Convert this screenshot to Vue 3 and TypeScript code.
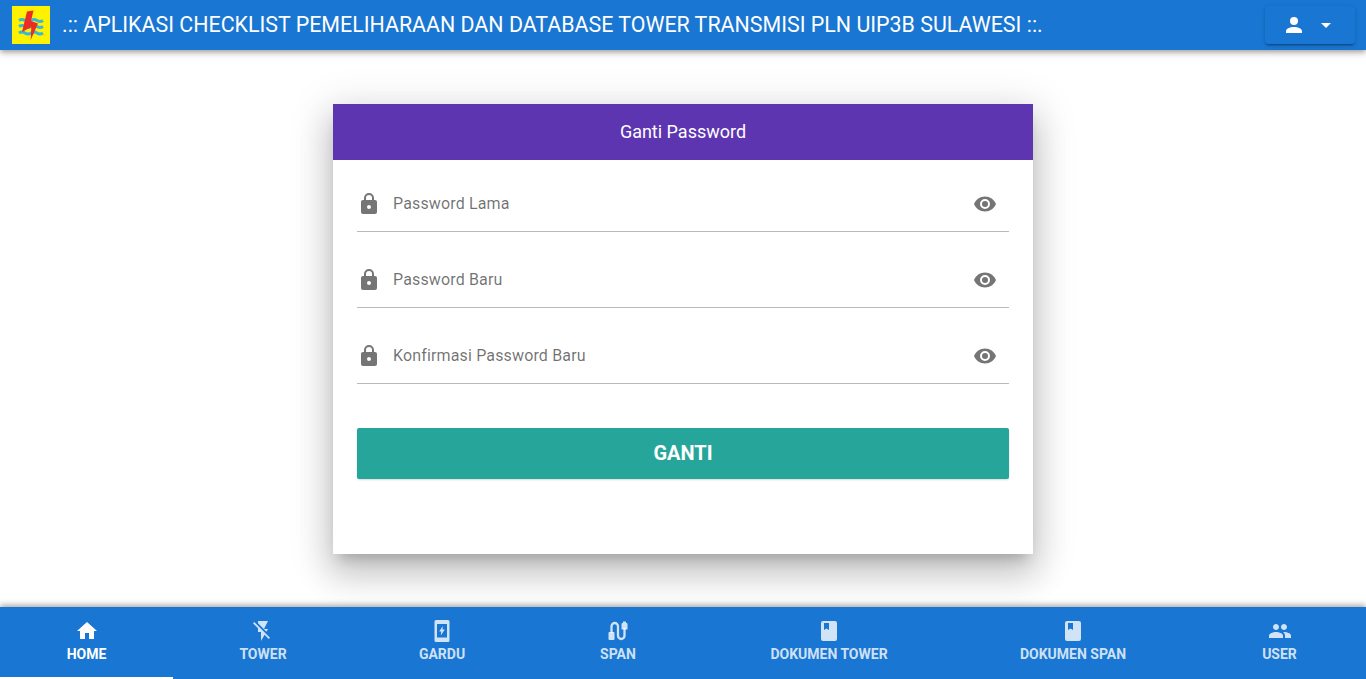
<script setup lang="ts">
interface Tab { label: string; path: string; }

const lock = 'M12,17A2,2 0 0,0 14,15C14,13.89 13.1,13 12,13A2,2 0 0,0 10,15A2,2 0 0,0 12,17M18,8A2,2 0 0,1 20,10V20A2,2 0 0,1 18,22H6A2,2 0 0,1 4,20V10C4,8.89 4.9,8 6,8H7V6A5,5 0 0,1 12,1A5,5 0 0,1 17,6V8H18M12,3A3,3 0 0,0 9,6V8H15V6A3,3 0 0,0 12,3Z'
const eye = 'M12,9A3,3 0 0,0 9,12A3,3 0 0,0 12,15A3,3 0 0,0 15,12A3,3 0 0,0 12,9M12,17A5,5 0 0,1 7,12A5,5 0 0,1 12,7A5,5 0 0,1 17,12A5,5 0 0,1 12,17M12,4.5C7,4.5 2.73,7.61 1,12C2.73,16.39 7,19.5 12,19.5C17,19.5 21.27,16.39 23,12C21.27,7.61 17,4.5 12,4.5Z'
const book = 'M6,2H18A2,2 0 0,1 20,4V20A2,2 0 0,1 18,22H6A2,2 0 0,1 4,20V4A2,2 0 0,1 6,2ZM7,4V11L9.5,9.5L12,11V4H7Z'

const fields: string[] = ['Password Lama', 'Password Baru', 'Konfirmasi Password Baru']

const tabs: Tab[] = [
  { label: 'HOME', path: 'M10,20V14H14V20H19V12H22L12,3L2,12H5V20H10Z' },
  { label: 'TOWER', path: 'M17,10H13L17,2H7V4.18L15.46,12.64M3.27,3L2,4.27L7,9.27V13H10V22L13.58,15.86L17.73,20L19,18.73L3.27,3Z' },
  { label: 'GARDU', path: 'M6,1H18A1.5,1.5 0 0,1 19.5,2.5V21.5A1.5,1.5 0 0,1 18,23H6A1.5,1.5 0 0,1 4.5,21.5V2.5A1.5,1.5 0 0,1 6,1ZM7,5V18.5H17V5H7ZM12.8,7L9.2,12.4H11.2L10.8,16.5L14.8,10.6H12.5L12.8,7Z' },
  { label: 'SPAN', path: '' },
  { label: 'DOKUMEN TOWER', path: book },
  { label: 'DOKUMEN SPAN', path: book },
  { label: 'USER', path: 'M16 11c1.66 0 2.99-1.34 2.99-3S17.66 5 16 5c-1.66 0-3 1.34-3 3s1.34 3 3 3zm-8 0c1.66 0 2.99-1.34 2.99-3S9.66 5 8 5C6.34 5 5 6.34 5 8s1.34 3 3 3zm0 2c-2.33 0-7 1.17-7 3.5V19h14v-2.5c0-2.33-4.67-3.5-7-3.5zm8 0c-.29 0-.62.02-.97.05 1.16.84 1.97 1.97 1.97 3.45V19h6v-2.5c0-2.33-4.67-3.5-7-3.5z' },
]
</script>

<template>
  <div class="page">
    <header class="topbar">
      <svg class="logo" viewBox="0 0 38 38" aria-label="PLN">
        <rect width="38" height="38" fill="#fff200" />
        <path d="M7 14.5q3-2 6 0t6 0t6 0t6 0M7 20.5q3-2 6 0t6 0t6 0t6 0M7 27q3-2 6 0t6 0t6 0t6 0" fill="none" stroke="#35b8dc" stroke-width="2.8" />
        <path d="M15 5.5L21.5 4.5L19 15L26 17.5L18.7 34L19.3 21L10 26Z" fill="#ee2a24" />
      </svg>
      <h1 class="title">.:: APLIKASI CHECKLIST PEMELIHARAAN DAN DATABASE TOWER TRANSMISI PLN UIP3B SULAWESI ::.</h1>
      <button class="account" type="button">
        <svg class="icon" viewBox="0 0 24 24"><path d="M12,4A4,4 0 0,1 16,8A4,4 0 0,1 12,12A4,4 0 0,1 8,8A4,4 0 0,1 12,4M12,14C16.42,14 20,15.79 20,18V20H4V18C4,15.79 7.58,14 12,14Z" /></svg>
        <svg class="icon" viewBox="0 0 24 24"><path d="M7,10L12,15L17,10H7Z" /></svg>
      </button>
    </header>

    <main class="content">
      <section class="card">
        <div class="card-title">Ganti Password</div>
        <form class="form" @submit.prevent>
          <label v-for="field in fields" :key="field" class="field">
            <svg class="icon field-icon" viewBox="0 0 24 24"><path :d="lock" /></svg>
            <input class="input" type="password" :placeholder="field" />
            <svg class="icon field-icon" viewBox="0 0 24 24"><path :d="eye" /></svg>
          </label>
          <button class="submit" type="submit">GANTI</button>
        </form>
      </section>
    </main>

    <nav class="tabs">
      <a v-for="(tab, i) in tabs" :key="tab.label" class="tab" :class="{ active: i === 0 }">
        <svg class="icon" viewBox="0 0 24 24">
          <path v-if="tab.path" :d="tab.path" />
          <g v-else>
            <path d="M5.5,14V7.25A3.25,3.25 0 0,1 12,7.25V16.75A3.25,3.25 0 0,0 18.5,16.75V9" fill="none" stroke="currentColor" stroke-width="2.3" />
            <path d="M2.5,14A1,1 0 0,1 3.5,13H7.5A1,1 0 0,1 8.5,14V20A1,1 0 0,1 7.5,21H3.5A1,1 0 0,1 2.5,20ZM15.5,5A1,1 0 0,1 16.5,4H17V2.5H20V4H20.5A1,1 0 0,1 21.5,5V10.5H15.5Z" />
          </g>
        </svg>
        <span class="tab-label">{{ tab.label }}</span>
      </a>
    </nav>
  </div>
</template>

<style scoped>
.page {
  height: 679px;
  display: flex;
  flex-direction: column;
  font-family: Roboto, sans-serif;
  background: #fff;
  overflow: hidden;
}

.icon {
  width: 24px;
  height: 24px;
  fill: currentColor;
  flex: none;
}

.topbar {
  height: 50px;
  flex: none;
  display: flex;
  align-items: center;
  padding: 0 11px 0 12px;
  background: #1976d2;
  color: #fff;
  box-shadow: 0 2px 4px -1px rgba(0, 0, 0, 0.2), 0 4px 5px 0 rgba(0, 0, 0, 0.14), 0 1px 10px 0 rgba(0, 0, 0, 0.12);
  position: relative;
  z-index: 2;
}

.logo {
  width: 38px;
  height: 38px;
  flex: none;
}

.title {
  flex: 1;
  margin: 0 0 0 12px;
  font-size: 21.4px;
  font-weight: 400;
  line-height: 1;
  white-space: nowrap;
}

.account {
  width: 90px;
  height: 38px;
  display: flex;
  align-items: center;
  justify-content: center;
  gap: 8px;
  border: 0;
  border-radius: 4px;
  background: #1976d2;
  color: #fff;
  box-shadow: 0 3px 1px -2px rgba(0, 0, 0, 0.2), 0 2px 2px 0 rgba(0, 0, 0, 0.14), 0 1px 5px 0 rgba(0, 0, 0, 0.12);
}

.content {
  flex: 1;
  min-height: 0;
  display: flex;
  justify-content: center;
  align-items: flex-start;
  padding-top: 54px;
}

.card {
  width: 700px;
  height: 450px;
  background: #fff;
  box-shadow: 0 10px 13px -6px rgba(0, 0, 0, 0.2), 0 20px 31px 3px rgba(0, 0, 0, 0.14), 0 8px 38px 7px rgba(0, 0, 0, 0.12);
}

.card-title {
  height: 54px;
  padding-bottom: 2px;
  display: flex;
  align-items: center;
  justify-content: center;
  background: #5e35b1;
  color: #fff;
  font-size: 18px;
  font-weight: 400;
}

.form {
  display: flex;
  flex-direction: column;
  padding: 20px 24px 0;
}

.field {
  height: 51px;
  margin-bottom: 24px;
  display: flex;
  align-items: center;
  gap: 12px;
  border-bottom: 1px solid rgba(0, 0, 0, 0.27);
  color: rgba(0, 0, 0, 0.54);
}

.field-icon {
  color: #757575;
  margin-bottom: 4px;
}

.input {
  flex: 1;
  min-width: 0;
  margin-bottom: 4px;
  border: 0;
  outline: 0;
  padding: 0;
  background: transparent;
  font: 400 16px Roboto, sans-serif;
  letter-spacing: 0.15px;
  color: rgba(0, 0, 0, 0.87);
}

.input::placeholder {
  color: rgba(0, 0, 0, 0.56);
  opacity: 1;
}

.field .field-icon:last-child {
  margin-right: 12px;
}

.submit {
  height: 51px;
  margin-top: 20px;
  padding: 0 0 2px;
  border: 0;
  border-radius: 2px;
  background: #26a69a;
  color: #fff;
  font: 700 20px Roboto, sans-serif;
  box-shadow: 0 1px 2px rgba(0, 0, 0, 0.15);
}

.tabs {
  height: 72px;
  flex: none;
  display: grid;
  grid-template-columns: 173fr 180fr 178fr 174fr 248fr 240fr 173fr;
  background: #1976d2;
  box-shadow: 0 -2px 6px rgba(0, 0, 0, 0.35);
  position: relative;
}

.tab {
  padding: 0 0 4px;
  display: flex;
  flex-direction: column;
  align-items: center;
  justify-content: center;
  gap: 3px;
  color: rgba(255, 255, 255, 0.8);
  font-size: 14px;
  font-weight: 700;
  letter-spacing: 0;
  border-bottom: 2px solid transparent;
}

.tab.active {
  color: #fff;
  border-bottom-color: #fff;
}

.tab-label {
  line-height: 16px;
}
</style>

<style>
html, body {
  margin: 0;
  overflow: hidden;
}
</style>
